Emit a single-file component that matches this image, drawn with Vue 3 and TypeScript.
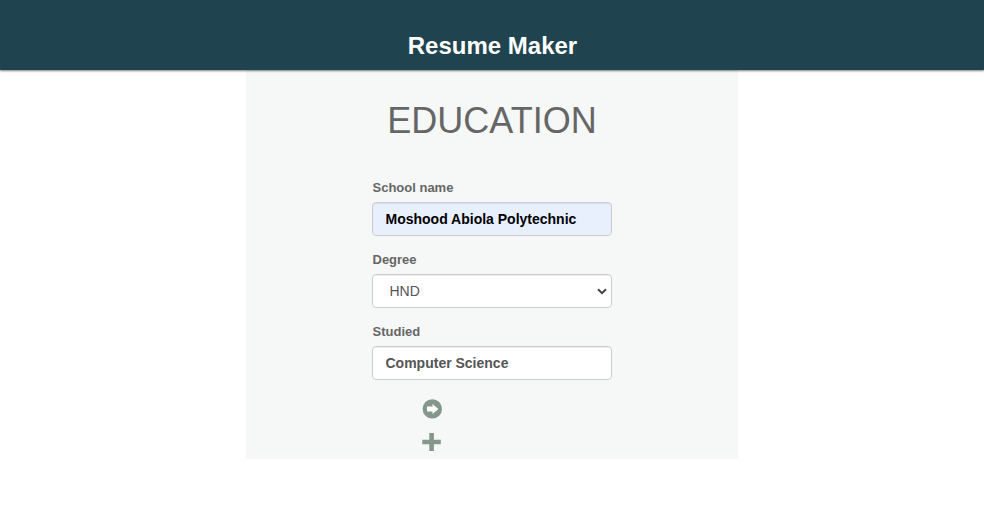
<script setup lang="ts">
import { ref } from 'vue'

const school = ref('Moshood Abiola Polytechnic')
const degree = ref('HND')
const studied = ref('Computer Science')
</script>

<template>
  <header class="topbar"><h3 class="brand">Resume Maker</h3></header>
  <main class="panel">
    <h1 class="title">EDUCATION</h1>
    <form class="form" @submit.prevent>
      <div class="group">
        <label class="label" for="school">School name</label>
        <input id="school" v-model="school" class="control filled" type="text" />
      </div>
      <div class="group">
        <label class="label" for="degree">Degree</label>
        <div class="select-wrap">
          <select id="degree" v-model="degree" class="control select">
            <option>HND</option>
            <option>OND</option>
            <option>BSc</option>
          </select>
          <svg class="chevron" viewBox="0 0 10 7">
            <path d="M1 1.3 5 5.2 9 1.3" />
          </svg>
        </div>
      </div>
      <div class="group">
        <label class="label" for="studied">Studied</label>
        <input id="studied" v-model="studied" class="control" type="text" />
      </div>
    </form>
    <div class="actions">
      <svg class="icon" viewBox="0 0 20 20">
        <path d="M10.3.2a9.7 9.7 0 1 1 0 19.4A9.7 9.7 0 0 1 10.3.2Z" />
        <path class="arrow" d="M10.5 5v2.6H5v4.8h5.5V15l5.9-5Z" />
      </svg>
      <svg class="icon" viewBox="0 0 20 20">
        <path d="M7.3 1h4.6v6.7H18.8v4.6h-6.9V19H7.3v-6.7H.3V7.7h7Z" />
      </svg>
    </div>
  </main>
</template>

<style>
body {
  margin: 0;
  background: #fff;
}
</style>

<style scoped>
.topbar {
  position: relative;
  box-sizing: border-box;
  height: 70px;
  padding: 32px 0 0 1px;
  background: #20444f;
  box-shadow: 0 1px 2px rgba(0, 0, 0, 0.5);
  font-family: "Liberation Sans", Arial, sans-serif;
}
.brand {
  margin: 0;
  color: #fff;
  font-size: 24px;
  line-height: 27px;
  font-weight: 700;
  text-align: center;
}
.panel {
  box-sizing: border-box;
  width: 492px;
  height: 389px;
  margin: 0 auto;
  padding-top: 31px;
  background: #f5f8f7;
  color: #666;
  font-family: "Liberation Sans", Arial, sans-serif;
}
.title {
  margin: 0;
  font-size: 36px;
  line-height: 40px;
  font-weight: 400;
  text-align: center;
}
.form {
  width: 240px;
  margin: 37px auto 0;
}
.group {
  height: 72px;
}
.label {
  display: block;
  height: 20px;
  margin-bottom: 4px;
  padding-left: 0.5px;
  font-size: 13px;
  line-height: 20px;
  font-weight: 700;
}
.control {
  display: block;
  box-sizing: border-box;
  width: 240px;
  height: 34px;
  padding: 6px 12px 6px 12.5px;
  border: 1px solid #ccc;
  border-radius: 4px;
  background: #fff;
  box-shadow: inset 0 1px 1px rgba(0, 0, 0, 0.075);
  color: #555;
  font: 700 14px/20px "Liberation Sans", Arial, sans-serif;
}
.filled {
  background: #e8f0fe;
  color: #000;
}
.select-wrap {
  position: relative;
}
.select {
  padding-left: 16.5px;
  appearance: none;
  font-weight: 400;
}
.chevron {
  position: absolute;
  top: 14px;
  right: 5px;
  width: 10px;
  height: 7px;
  fill: none;
  stroke: #444;
  stroke-width: 2;
  pointer-events: none;
}
.actions {
  display: flex;
  flex-direction: column;
  gap: 13px;
  margin: 5px 0 0 176px;
}
.icon {
  display: block;
  width: 20px;
  height: 20px;
  fill: #84978a;
}
.arrow {
  fill: #fff;
}
</style>
